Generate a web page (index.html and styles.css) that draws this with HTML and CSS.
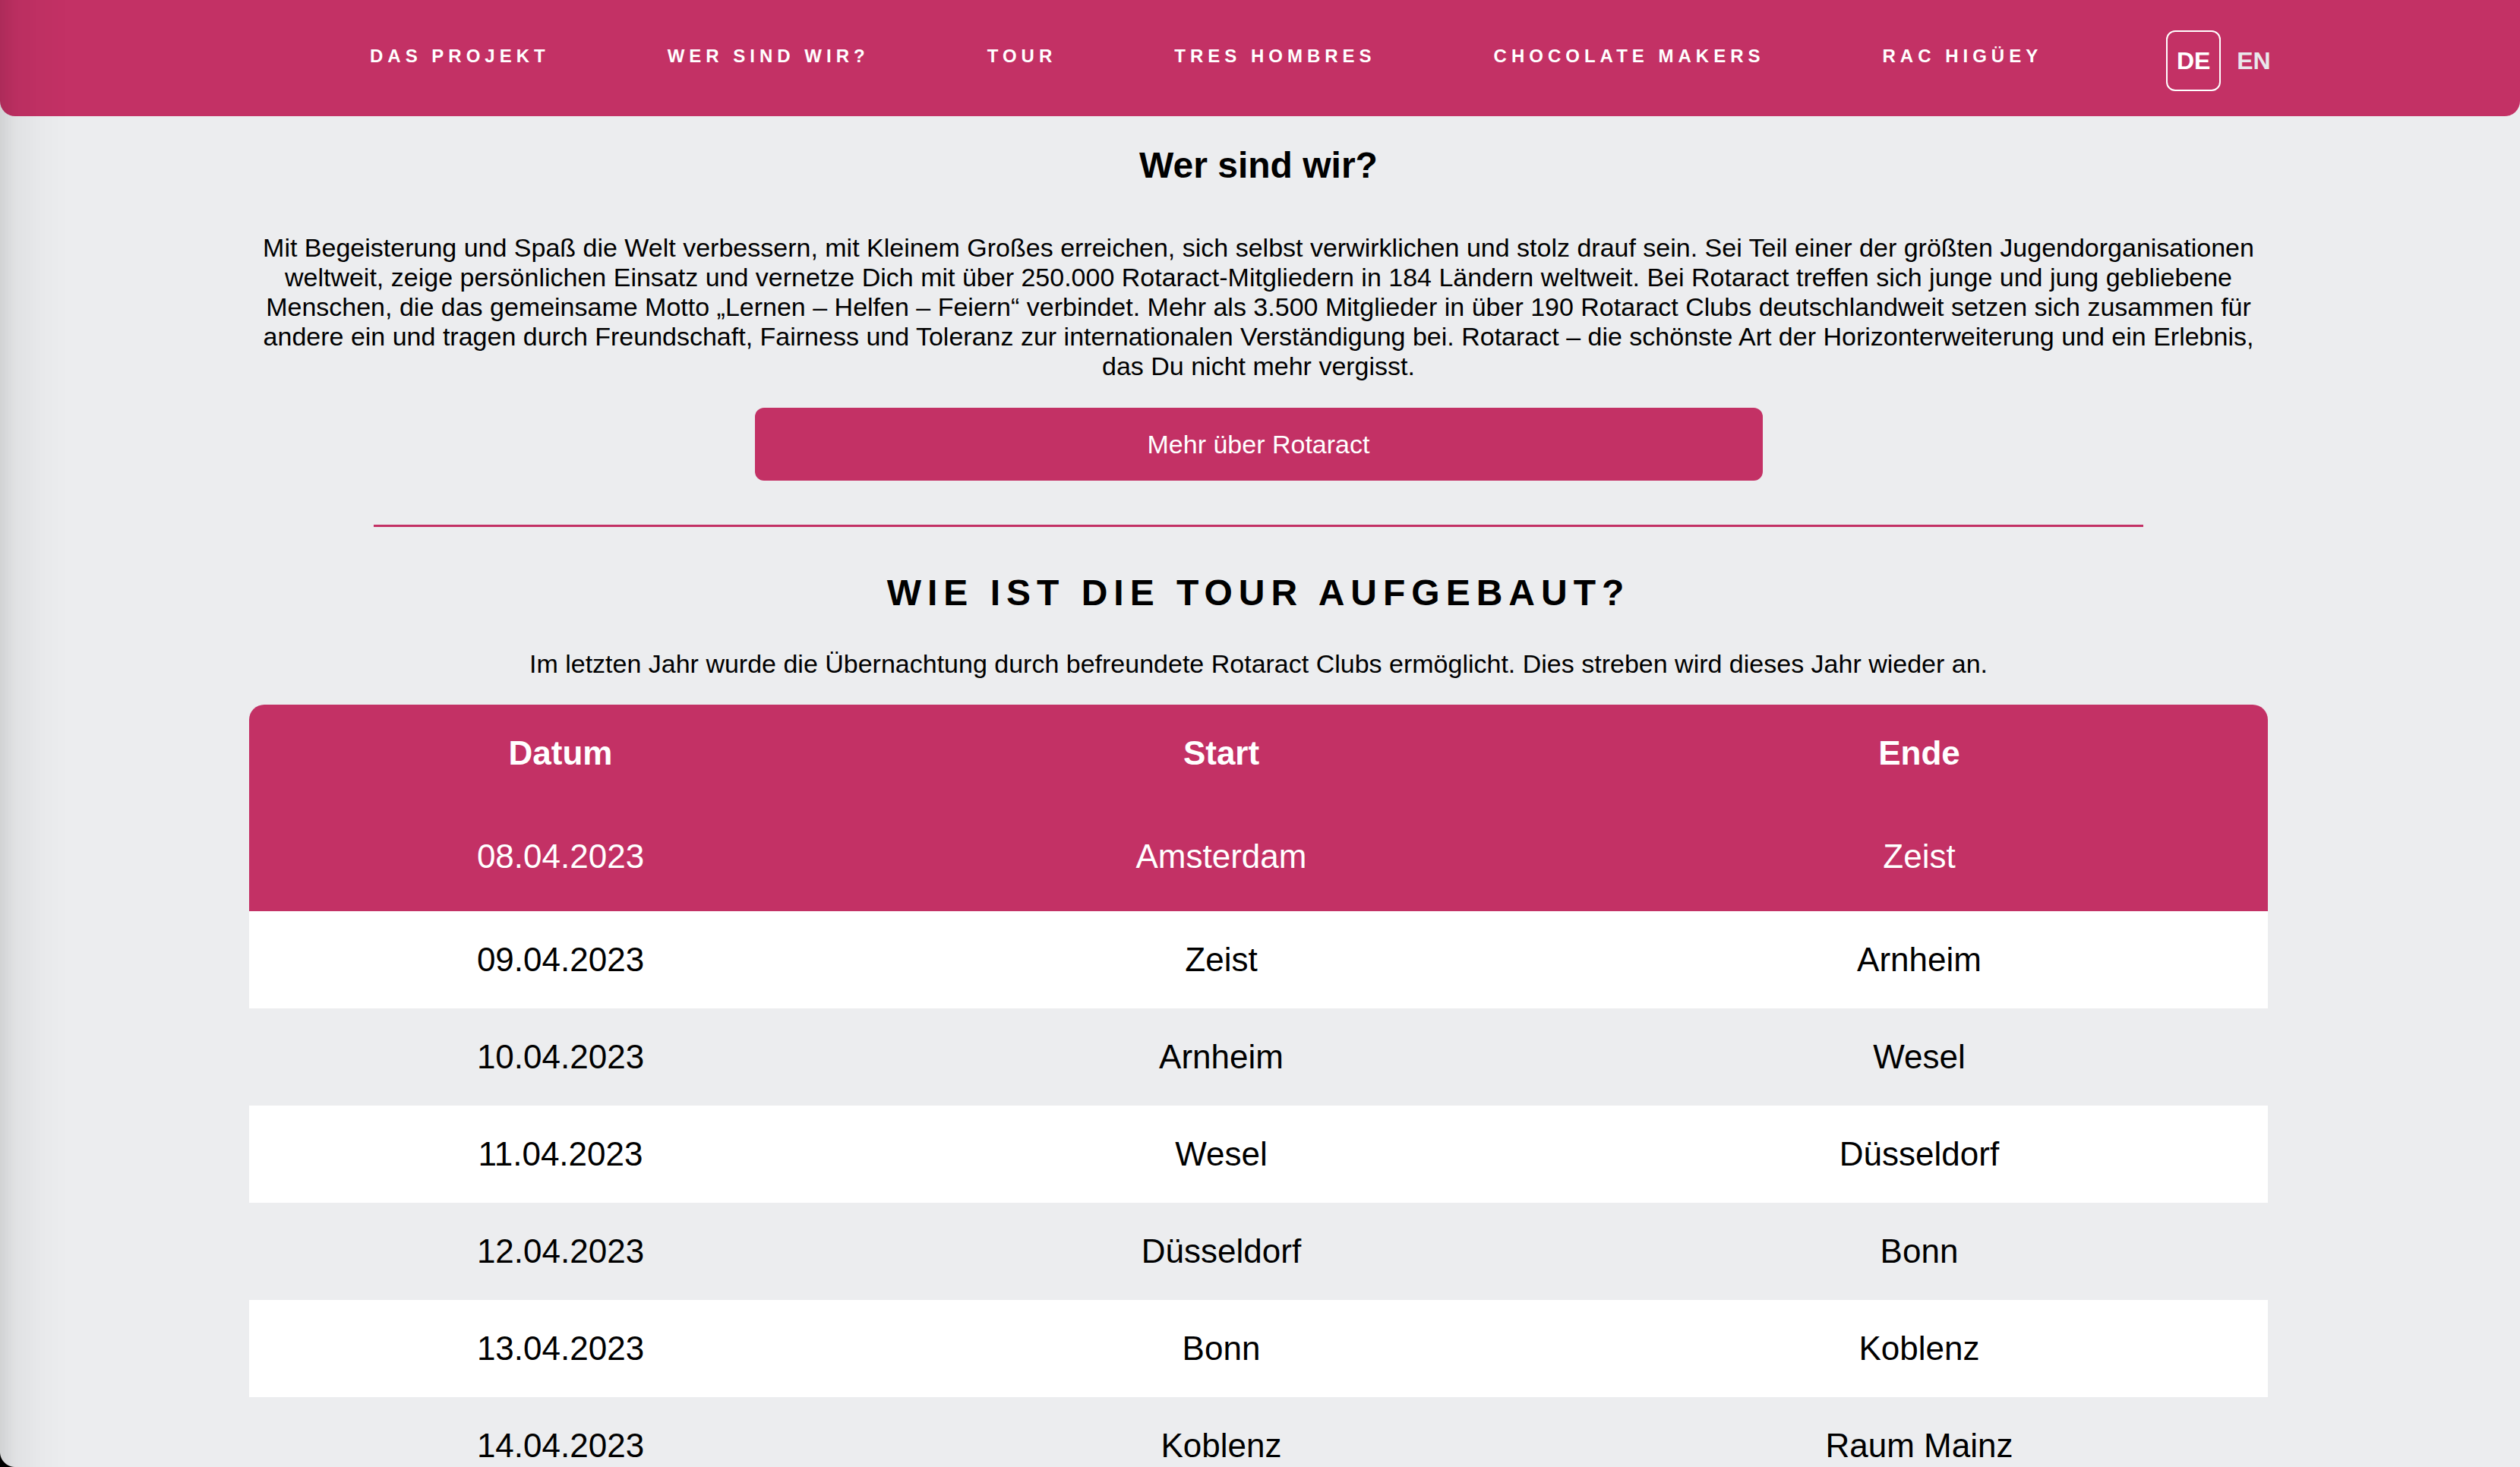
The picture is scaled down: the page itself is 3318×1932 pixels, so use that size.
FILE: index.html
```html
<!DOCTYPE html>
<html lang="de">
<head>
<meta charset="utf-8">
<title>Wer sind wir? – Tour</title>
<link rel="stylesheet" href="styles.css">
</head>
<body>
<header class="topbar">
  <nav class="nav">
    <a class="nav-link" href="#">DAS PROJEKT</a>
    <a class="nav-link" href="#">WER SIND WIR?</a>
    <a class="nav-link" href="#">TOUR</a>
    <a class="nav-link" href="#">TRES HOMBRES</a>
    <a class="nav-link" href="#">CHOCOLATE MAKERS</a>
    <a class="nav-link" href="#">RAC HIGÜEY</a>
  </nav>
  <div class="lang">
    <a class="lang-item lang-active" href="#">DE</a>
    <a class="lang-item" href="#">EN</a>
  </div>
</header>

<main class="content">
  <section class="about">
    <h2 class="about-title">Wer sind wir?</h2>
    <p class="about-text">Mit Begeisterung und Spaß die Welt verbessern, mit Kleinem Großes erreichen, sich selbst verwirklichen und stolz drauf sein. Sei Teil einer der größten Jugendorganisationen weltweit, zeige persönlichen Einsatz und vernetze Dich mit über 250.000 Rotaract-Mitgliedern in 184 Ländern weltweit. Bei Rotaract treffen sich junge und jung gebliebene Menschen, die das gemeinsame Motto „Lernen – Helfen – Feiern“ verbindet. Mehr als 3.500 Mitglieder in über 190 Rotaract Clubs deutschlandweit setzen sich zusammen für andere ein und tragen durch Freundschaft, Fairness und Toleranz zur internationalen Verständigung bei. Rotaract – die schönste Art der Horizonterweiterung und ein Erlebnis, das Du nicht mehr vergisst.</p>
    <a class="btn" href="#">Mehr über Rotaract</a>
  </section>

  <hr class="divider">

  <section class="tour">
    <h2 class="tour-title">WIE IST DIE TOUR AUFGEBAUT?</h2>
    <p class="tour-sub">Im letzten Jahr wurde die Übernachtung durch befreundete Rotaract Clubs ermöglicht. Dies streben wird dieses Jahr wieder an.</p>
    <div class="table-wrap">
      <table class="tour-table">
        <colgroup>
          <col class="col-date">
          <col class="col-start">
          <col>
        </colgroup>
        <thead>
          <tr class="head-row"><th>Datum</th><th>Start</th><th>Ende</th></tr>
        </thead>
        <tbody>
          <tr class="row-first"><td>08.04.2023</td><td>Amsterdam</td><td>Zeist</td></tr>
          <tr class="row-light"><td>09.04.2023</td><td>Zeist</td><td>Arnheim</td></tr>
          <tr class="row-grey"><td>10.04.2023</td><td>Arnheim</td><td>Wesel</td></tr>
          <tr class="row-light"><td>11.04.2023</td><td>Wesel</td><td>Düsseldorf</td></tr>
          <tr class="row-grey"><td>12.04.2023</td><td>Düsseldorf</td><td>Bonn</td></tr>
          <tr class="row-light"><td>13.04.2023</td><td>Bonn</td><td>Koblenz</td></tr>
          <tr class="row-grey"><td>14.04.2023</td><td>Koblenz</td><td>Raum Mainz</td></tr>
        </tbody>
      </table>
    </div>
  </section>
</main>
</body>
</html>
```

FILE: styles.css
```css
html, body {
  margin: 0;
  padding: 0;
}

body {
  background: #ecedef;
  font-family: "Liberation Sans", Arial, Helvetica, sans-serif;
  color: #000;
}

/* window edge shadow on the left */
body::before {
  content: "";
  position: fixed;
  left: 0;
  top: 0;
  bottom: 0;
  width: 90px;
  background: linear-gradient(to right, rgba(0,0,0,0.11) 0, rgba(0,0,0,0.045) 22px, rgba(0,0,0,0.015) 55px, rgba(0,0,0,0) 90px);
  pointer-events: none;
  z-index: 10;
}

body::after {
  content: "";
  position: fixed;
  left: 0;
  bottom: 0;
  width: 20px;
  height: 20px;
  background: radial-gradient(circle at 100% 0, rgba(0,0,0,0) 19.5px, #000 20.5px);
  pointer-events: none;
  z-index: 11;
}

/* top bar */
.topbar {
  height: 153px;
  background: #c33165;
  border-radius: 0 0 20px 20px;
  display: flex;
  align-items: center;
  padding-left: 487px;
  box-sizing: border-box;
}

.nav {
  display: flex;
  gap: 155px;
  padding-bottom: 6px;
}

.nav-link {
  color: #fff;
  text-decoration: none;
  font-weight: 700;
  font-size: 24px;
  letter-spacing: 6px;
  white-space: nowrap;
}

.lang {
  display: flex;
  align-items: center;
  gap: 21px;
  margin-left: 163px;
  padding-top: 7px;
}

.lang-item {
  font-size: 32px;
  font-weight: 700;
  color: #e9e7eb;
  text-decoration: none;
}

.lang-active {
  color: #fff;
  width: 72px;
  height: 80px;
  box-sizing: border-box;
  border: 2px solid #fff;
  border-radius: 12px;
  display: flex;
  align-items: center;
  justify-content: center;
}

/* content */
.content {
  width: 2658px;
  margin: 0 auto;
  padding-right: 4px;
}

.about {
  display: flex;
  flex-direction: column;
  align-items: center;
}

.about-title {
  margin: 37px 0 0;
  font-size: 48px;
  line-height: 55px;
  font-weight: 700;
  text-align: center;
}

.about-text {
  margin: 62px 0 0;
  font-size: 34px;
  line-height: 39px;
  text-align: center;
}

.btn {
  margin-top: 35px;
  width: 1327px;
  height: 96px;
  background: #c33165;
  color: #fff;
  border-radius: 12px;
  text-decoration: none;
  font-size: 34px;
  display: flex;
  align-items: center;
  justify-content: center;
}

.divider {
  width: 2330px;
  height: 3px;
  border: 0;
  background: #c33165;
  margin: 58px auto 0;
}

.tour-title {
  margin: 59px 0 0;
  font-size: 48px;
  line-height: 55px;
  letter-spacing: 8px;
  font-weight: 700;
  text-align: center;
}

.tour-sub {
  margin: 47px 0 0;
  font-size: 34px;
  line-height: 39px;
  text-align: center;
}

.table-wrap {
  margin-top: 34px;
  border-radius: 20px 20px 0 0;
  overflow: hidden;
}

.tour-table {
  width: 100%;
  border-collapse: collapse;
  table-layout: fixed;
  font-size: 44px;
}

.col-date { width: 820px; }
.col-start { width: 920px; }

.tour-table th,
.tour-table td {
  padding: 0;
  text-align: center;
  vertical-align: middle;
}

.head-row {
  height: 128px;
  background: #c33165;
  color: #fff;
}

.head-row th {
  font-weight: 700;
}

.row-first {
  height: 144px;
  background: #c33165;
  color: #fff;
}

.row-light {
  height: 128px;
  background: #fff;
}

.row-grey {
  height: 128px;
  background: #ecedef;
}
```
